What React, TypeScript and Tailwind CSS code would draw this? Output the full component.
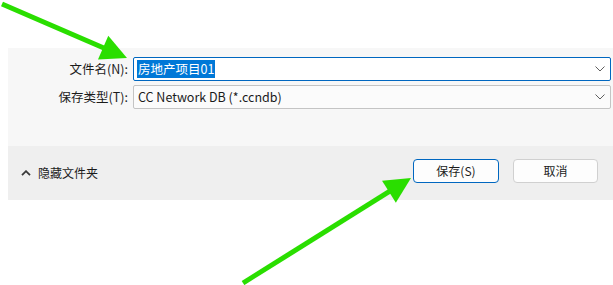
import React from "react";

const font = { fontFamily: '"Noto Sans CJK SC", "Noto Sans", sans-serif' };

function Chevron() {
  return (
    <svg width="10" height="6" viewBox="0 0 10 6">
      <path d="M0.5 0.5 L5 5 L9.5 0.5" fill="none" stroke="#5f5f5f" strokeWidth="1" />
    </svg>
  );
}

function ChevronUp() {
  return (
    <svg width="10" height="6" viewBox="0 0 10 6">
      <path d="M1 5.2 L5 1.2 L9 5.2" fill="none" stroke="#3a3a3a" strokeWidth="1.8" />
    </svg>
  );
}

function Arrow({ x1, y1, x2, y2 }: { x1: number; y1: number; x2: number; y2: number }) {
  const dx = x2 - x1;
  const dy = y2 - y1;
  const len = Math.hypot(dx, dy);
  const ux = dx / len;
  const uy = dy / len;
  const hl = 26;
  const hw = 13;
  const bx = x2 - ux * hl;
  const by = y2 - uy * hl;
  const px = -uy;
  const py = ux;
  const pts = `${x2},${y2} ${bx + px * hw},${by + py * hw} ${bx - px * hw},${by - py * hw}`;
  return (
    <g>
      <line x1={x1} y1={y1} x2={bx + ux * 2} y2={by + uy * 2} stroke="#2ade00" strokeWidth="5" />
      <polygon points={pts} fill="#2ade00" />
    </g>
  );
}

export default function App() {
  return (
    <div className="relative w-[613px] h-[285px] bg-white overflow-hidden text-[12px] text-[#1b1b1b]" style={font}>
      <div className="h-[48px]" />
      <div className="ml-[8px] flex flex-col">
        <div className="h-[98px] bg-[#f7f7f7] pt-[9px] pr-[2px] flex flex-col gap-[4px]">
          <div className="flex items-center gap-[5px]">
            <div className="w-[120px] text-right leading-none text-[12.5px]">文件名(N):</div>
            <div className="w-[478px] h-[24px] border border-[#0067c0] bg-white rounded-[2px] flex items-center pl-[3px] pr-[5px]">
              <span className="bg-[#0078d7] text-white leading-[18px] px-[1px] text-[12.5px]">房地产项目01</span>
              <div className="flex-1" />
              <Chevron />
            </div>
          </div>
          <div className="flex items-center gap-[5px]">
            <div className="w-[120px] text-right leading-none text-[12.5px]">保存类型(T):</div>
            <div className="w-[478px] h-[24px] border border-[#c4c4c4] bg-[#fbfbfb] rounded-[2px] flex items-center pl-[4px] pr-[5px]">
              <span className="text-[12.5px] leading-none">CC Network DB (*.ccndb)</span>
              <div className="flex-1" />
              <Chevron />
            </div>
          </div>
        </div>
        <div className="h-[54px] bg-[#efefef] flex items-center pl-[13px] pr-[15px]">
          <ChevronUp />
          <span className="ml-[7px] text-[12px]">隐藏文件夹</span>
          <div className="flex-1" />
          <button className="w-[86px] h-[24px] mt-[-4px] border border-[#0067c0] bg-[#fdfdfd] rounded-[4px] text-[12px]">保存(S)</button>
          <button className="ml-[14px] w-[85px] h-[24px] mt-[-4px] border border-[#d0d0d0] bg-[#fdfdfd] rounded-[4px] text-[12px]">取消</button>
        </div>
      </div>
      <svg className="absolute inset-0 pointer-events-none" width="613" height="285">
        <Arrow x1={2} y1={4} x2={127} y2={58} />
        <Arrow x1={243} y1={283} x2={411} y2={178} />
      </svg>
    </div>
  );
}
